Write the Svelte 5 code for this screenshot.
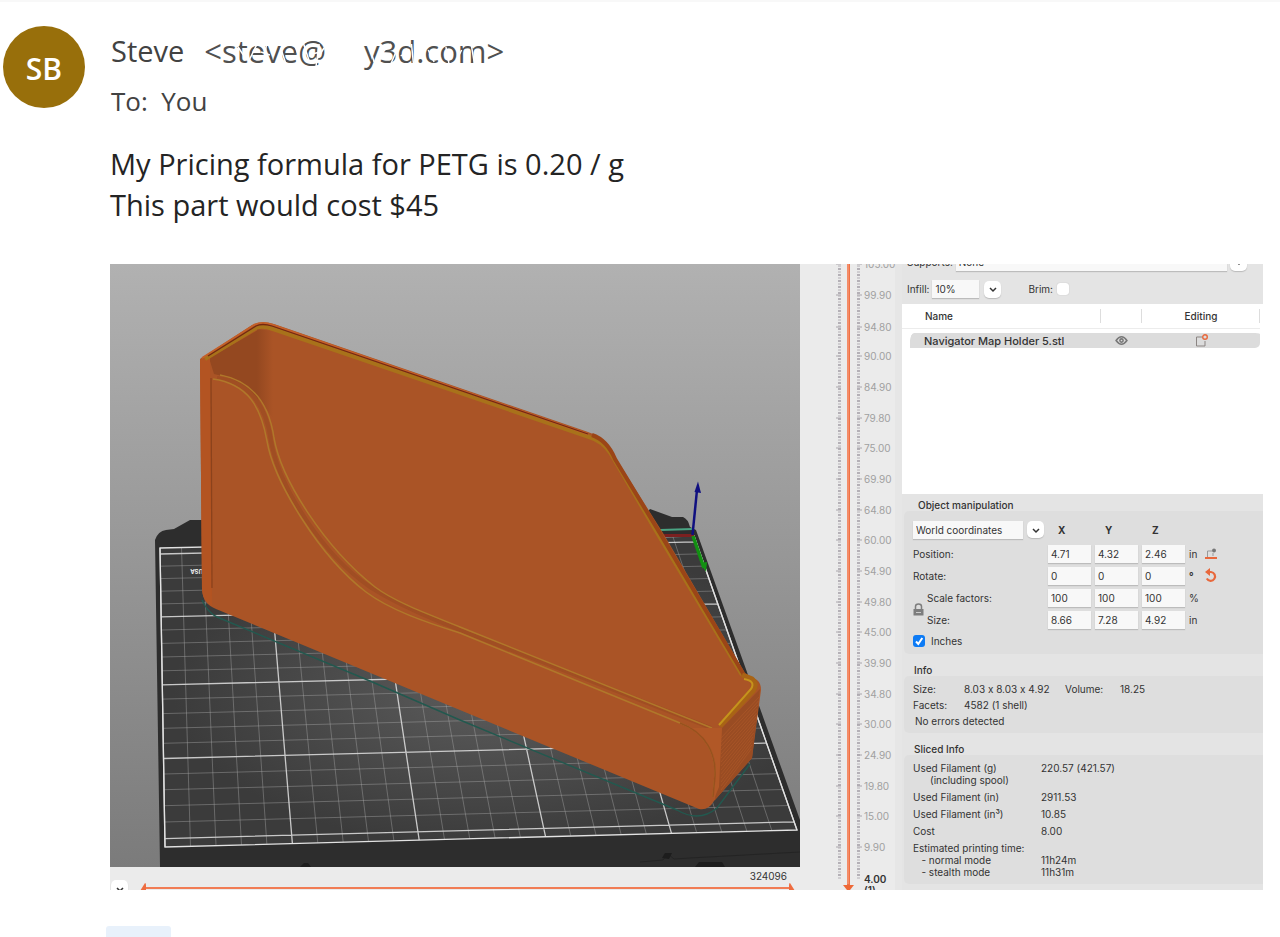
<script lang="ts">
	type Point = [number, number];

	// Print bed corners on screen: back left, back right, front right, front left
	const bed: Point[] = [
		[160, 548],
		[694, 536],
		[797, 830],
		[165, 847]
	];

	// Maps the unit square onto the four bed corners
	function project(u: number, v: number): Point {
		const [[x0, y0], [x1, y1], [x2, y2], [x3, y3]] = bed;
		const dx1 = x1 - x2;
		const dx2 = x3 - x2;
		const dy1 = y1 - y2;
		const dy2 = y3 - y2;
		const sx = x0 - x1 + x2 - x3;
		const sy = y0 - y1 + y2 - y3;
		const det = dx1 * dy2 - dx2 * dy1;
		const g = (sx * dy2 - dx2 * sy) / det;
		const h = (dx1 * sy - sx * dy1) / det;
		const w = g * u + h * v + 1;
		return [
			((x1 - x0 + g * x1) * u + (x3 - x0 + h * x3) * v + x0) / w,
			((y1 - y0 + g * y1) * u + (y3 - y0 + h * y3) * v + y0) / w
		];
	}

	function line(a: Point, b: Point) {
		return `M${a[0].toFixed(1)} ${a[1].toFixed(1)}L${b[0].toFixed(1)} ${b[1].toFixed(1)}`;
	}

	let minor = '';
	let major = '';
	for (let mm = 0; mm <= 250; mm += 10) {
		const d = line(project(mm / 250, 0), project(mm / 250, 1));
		if (mm % 50 === 0) major += d;
		else minor += d;
	}
	for (let mm = 5; mm <= 205; mm += 10) {
		const d = line(project(0, mm / 210), project(1, mm / 210));
		if ((mm - 5) % 50 === 0) major += d;
		else minor += d;
	}

	const layers = [
		105, 99.9, 94.8, 90, 84.9, 79.8, 75, 69.9, 64.8, 60, 54.9, 49.8, 45, 39.9, 34.8, 30, 24.9, 19.8,
		15, 9.9
	];
	const layerY = (z: number) => Math.round((105 - z) * 6.13);
	const dots = Array.from({ length: 205 }, (_, i) => i * 3 + 2);

	const rows = [
		{ label: 'Position:', values: ['4.71', '4.32', '2.46'], unit: 'in', icon: 'drop' },
		{ label: 'Rotate:', values: ['0', '0', '0'], unit: '°', icon: 'reset' },
		{ label: 'Scale factors:', values: ['100', '100', '100'], unit: '%', inset: true },
		{ label: 'Size:', values: ['8.66', '7.28', '4.92'], unit: 'in', inset: true }
	];
	const axes = ['X', 'Y', 'Z'];
</script>

<main>
	<header>
		<div class="avatar">SB</div>
		<div class="people">
			<p class="from">
				Steve
				<span class="address">
					&lt;steve@<i></i>y3d.com&gt;
					<svg class="smudge" viewBox="0 0 305 40" preserveAspectRatio="none" aria-hidden="true">
						<path d="M34 14l6 9M46 28l8-16M58 20l9 3M64 10l-3 18M78 16l5 15M92 12l3 9M101 11l6 18M110 22l8-2M117 12l-3 22M122 16l-9 14" />
						<path d="M168 14l5 16M182 20l8-8M190 32l6-14M200 24l9-6M211 12l2 20M228 18l6 12M246 15l3 16M262 18l-6 12M272 14l3 18" />
					</svg>
				</span>
			</p>
			<p class="to">To:&nbsp; You</p>
		</div>
	</header>

	<div class="message">
		<p>My Pricing formula for PETG is 0.20 / g</p>
		<p>This part would cost $45</p>
	</div>

	<section class="slicer">
		<div class="preview">
			<svg class="scene" viewBox="110 264 690 603" role="img" aria-label="Sliced map holder on the print bed">
				<defs>
					<linearGradient id="sky" x1="0" y1="0" x2="0" y2="1">
						<stop offset="0" stop-color="#b1b1b1" />
						<stop offset="1" stop-color="#7b7b7b" />
					</linearGradient>
					<radialGradient id="plate" cx="0.52" cy="0.5" r="0.5">
						<stop offset="0" stop-color="#5c5c5c" />
						<stop offset="1" stop-color="#3b3b3b" />
					</radialGradient>
					<linearGradient id="fold" x1="0" y1="0" x2="1" y2="0">
						<stop offset="0" stop-color="#944820" />
						<stop offset="1" stop-color="#aa5426" />
					</linearGradient>
				</defs>
				<rect x="110" y="264" width="690" height="603" fill="url(#sky)" />
				<path
					d="M155 540Q158 531 166 530L174 529L190 520H640L650 509L672 517H683Q688 519 690 527L696 530L800 820V867H160Z"
					fill="#2d2d2d"
				/>
				<path d={`M${bed.map((p) => p.join(' ')).join('L')}Z`} fill="url(#plate)" />
				<path d={minor} stroke="#a9a9a9" stroke-opacity="0.42" fill="none" />
				<path d={major} stroke="#d8d8d8" stroke-opacity="0.9" stroke-width="1.3" fill="none" />
				<path d={`M${bed.map((p) => p.join(' ')).join('L')}Z`} stroke="#e2e2e2" stroke-width="1.3" fill="none" />
				<text class="brand" x="-203" y="-569" transform="rotate(180)">USA</text>
				<path d="M640 862L663 860L668 854L674 859L690 858L800 852" stroke="#242424" fill="none" />
				<path d="M300 867L304 863H308L311 867M662 858l3-5h7l-3 6ZM695 867L699 862H722L725 867" fill="#1d1d1d" />
				<path
					d="M202 600Q208 613 217 617L370 681L460 720L677 810Q699 823 717 808L750 764"
					stroke="#22594f"
					stroke-width="1.4"
					fill="none"
				/>
				<path d="M660 530L693 529" stroke="#4aa483" stroke-width="2" />
				<path d="M664 535.500H694" stroke="#7b2020" stroke-width="3" />
				<path d="M693 536L704 568" stroke="#129012" stroke-width="3.500" />
				<path d="M701 563l5 9 1-10z" fill="#129012" />
				<path d="M692.500 535L697 490" stroke="#101080" stroke-width="2.500" />
				<path d="M694.500 492L698 481.500L701 493Z" fill="#101080" />

				<path
					d="M200 359L252 325Q262 320 274 324L588 432Q606 438 617 460L663 533L745 673L757 680Q761 683 761 690L752 758L714 801Q708 811 699 809L216 609Q203 604 202 590Z"
					fill="#aa5426"
				/>
				<path d="M209 358L258 330L258 400Q246 381 214 374Z" fill="#944820" />
				<path d="M257 329L273 331V418L257 397Z" fill="url(#fold)" />
				<path d="M200 359L210 357L212 606Q203 602 202 590Z" fill="#b35422" />
				<path d="M722 728L760 689L752 758L715 800Z" fill="#994c23" />
				<g stroke="#b8602c" stroke-opacity="0.45" fill="none">
					{#each Array(14) as _, i}
						<path d={`M721 ${738 + i * 4}L${759 - i * 0.6} ${697 + i * 4}`} />
					{/each}
				</g>
				<path
					d="M205 359L256 328Q262 325 273 329L589 437Q603 441 611 454L656 531L742 675"
					stroke="#a8721a"
					stroke-width="4"
					fill="none"
				/>
				<path d="M202 358L254 325Q262 321 273 325L588 434" stroke="#c4602a" stroke-width="2" fill="none" />
				<path d="M208 356L256 326Q262 323 272 326L588 434" stroke="#742712" stroke-width="1.3" fill="none" />
				<path d="M592 435Q607 440 615 459L661 535L744 675" stroke="#9b4517" stroke-width="4" fill="none" />
				<path d="M211 378L212 588" stroke="#8b421c" stroke-width="1.300" fill="none" />
				<g fill="none" stroke-linejoin="round">
					<path
						d="M217 378C248 382 266 404 271 441C279 487 323 555 370 587C395 603 425 616 455 628L711 728"
						stroke="#a04e23"
						stroke-width="4"
					/>
					<path
						d="M213 379C248 384 261 407 267 441C274 482 320 557 366 592C390 610 425 622 460 633L680 723C707 733 716 755 715 776L713 797"
						stroke="#b0782a"
						stroke-width="1.500"
					/>
					<path
						d="M220 375C252 381 269 403 274 438C281 479 324 547 375 587C395 602 428 614 460 627L712 728"
						stroke="#b0782a"
						stroke-width="1.500"
					/>
				</g>
				<path d="M690 728Q713 742 716 766L714 799L719 787L722 728Z" fill="#b15827" />
				<path d="M680 723C707 733 716 755 715 776L713 797" stroke="#98501f" stroke-width="1.500" fill="none" />
				<path d="M742 675L752 679Q758 684 753 691L720 726" stroke="#a86415" stroke-width="5" fill="none" />
				<path d="M744 679Q756 681 751 689L719 725" stroke="#c5931c" stroke-width="2" fill="none" />
			</svg>
			<div class="moves">
				<button class="drop" aria-label="Collapse">
					<svg viewBox="0 0 10 10"><path d="M2 4l3 3 3-3" /></svg>
				</button>
				<output>324096</output>
				<svg class="handle" viewBox="0 0 6 8"><path d="M5 0Q6 0 6 2V8H0Z" /></svg>
				<div class="track"></div>
				<svg class="handle" viewBox="0 0 6 8"><path d="M1 0Q0 0 0 2V8H6Z" /></svg>
			</div>
		</div>

		<svg class="ruler" viewBox="0 0 102 626" width="102" height="626">
			<path d="M95 0H102V626H95Z" fill="#e6e6e6" />
			{#each dots as y, i}
				<path d={`M38 ${y}h3M57 ${y}h3`} stroke="#b4b0b6" stroke-width={i % 2 ? 2 : 1} />
			{/each}
			{#each layers as z}
				<path d={`M36 ${layerY(z)}h5M57 ${layerY(z)}h5`} stroke="#aaa6ac" />
				<text x="64" y={layerY(z) + 4}>{z.toFixed(2)}</text>
			{/each}
			<path d="M47 0H50V626H47Z" fill="#ef7145" />
			<path d="M48 0V620" stroke="#f9a98c" />
			<path d="M43 621H54L50 626H47Z" fill="#ee6836" />
			<text class="current" x="64" y="619">4.00</text>
			<text class="current" x="64" y="630">(1)</text>
		</svg>

		<aside>
			<div class="settings">
				<div class="supports">
					<label for="supports">Supports:</label>
					<input id="supports" value="None" />
					<button class="drop" aria-label="Choose supports">
						<svg viewBox="0 0 10 10"><path d="M2 4l3 3 3-3" /></svg>
					</button>
				</div>
				<div class="infill">
					<label for="infill">Infill:</label>
					<input id="infill" value="10%" />
					<button class="drop" aria-label="Choose infill">
						<svg viewBox="0 0 10 10"><path d="M2 4l3 3 3-3" /></svg>
					</button>
					<label class="brim">Brim: <input type="checkbox" /></label>
				</div>
			</div>

			<table class="objects">
				<thead>
					<tr><th>Name</th><th aria-label="Visible"></th><th>Editing</th></tr>
				</thead>
				<tbody>
					<tr>
						<td>Navigator Map Holder 5.stl</td>
						<td>
							<svg class="eye" viewBox="0 0 12 10">
								<path d="M1 5Q6-2 11 5Q6 12 1 5Z" />
								<circle cx="6" cy="5" r="1.500" />
							</svg>
						</td>
						<td>
							<svg class="edit" viewBox="0 0 13 13">
								<path d="M7 3H1.500V12H10V7" stroke="#8b8583" />
								<circle cx="10" cy="3" r="2.300" stroke="#e8683c" stroke-width="1.400" />
							</svg>
						</td>
					</tr>
				</tbody>
			</table>

			<h2>Object manipulation</h2>
			<div class="box manipulation">
				<div class="row axes">
					<div class="coords">
						<input aria-label="Coordinates" value="World coordinates" />
						<button class="drop" aria-label="Choose coordinates">
							<svg viewBox="0 0 10 10"><path d="M2 4l3 3 3-3" /></svg>
						</button>
					</div>
					{#each axes as axis}
						<b>{axis}</b>
					{/each}
				</div>
				{#each rows as row}
					<div class="row">
						<span class="label" class:inset={row.inset}>{row.label}</span>
						{#each row.values as value, i}
							<input aria-label={`${row.label} ${axes[i]}`} {value} />
						{/each}
						<span class:degree={row.unit === '°'}>{row.unit}</span>
						{#if row.icon === 'drop'}
							<svg class="tool" viewBox="0 0 12 12" fill="none">
								<path d="M2.500 9V3H7M8 8V5" stroke="#999" />
								<circle cx="9" cy="2.500" r="2" fill="#777" />
								<path d="M0 10H12" stroke="#e8683c" stroke-width="2" />
							</svg>
						{:else if row.icon === 'reset'}
							<svg class="tool" viewBox="0 0 12 12" fill="none">
								<path d="M3 2H6A4.400 4.400 0 1 1 1.800 8.500" stroke="#e8683c" stroke-width="2.200" />
								<path d="M0 2L5 -2V6Z" fill="#e8683c" />
							</svg>
						{/if}
					</div>
				{/each}
				<svg class="lock" viewBox="0 0 11 13">
					<path d="M2.500 6V3.500Q2.500 1 5.500 1Q8.500 1 8.500 3.500V6" fill="none" stroke="#7d7d7d" stroke-width="1.500" />
					<path d="M0.500 6H10.500V12.500H0.500Z" fill="#7d7d7d" />
					<path d="M3 9.500H8" stroke="#ccc" />
				</svg>
				<label class="inches">
					<input type="checkbox" checked />
					<svg viewBox="0 0 12 12"><path d="M3 6.500L5.300 9L9.300 3" /></svg>
					Inches
				</label>
			</div>

			<h2>Info</h2>
			<dl class="box info">
				<dt>Size:</dt>
				<dd>8.03 x 8.03 x 4.92</dd>
				<dt>Volume:</dt>
				<dd>18.25</dd>
				<dt>Facets:</dt>
				<dd>4582 (1 shell)</dd>
				<dd class="status">No errors detected</dd>
			</dl>

			<h2>Sliced Info</h2>
			<dl class="box sliced">
				<dt>Used Filament (g)<br /><span>(including spool)</span></dt>
				<dd>220.57 (421.57)</dd>
				<dt>Used Filament (in)</dt>
				<dd>2911.53</dd>
				<dt>Used Filament (in³)</dt>
				<dd>10.85</dd>
				<dt>Cost</dt>
				<dd>8.00</dd>
				<dt>Estimated printing time:<br />&nbsp;&nbsp; - normal mode<br />&nbsp;&nbsp; - stealth mode</dt>
				<dd><br />11h24m<br />11h31m</dd>
			</dl>
		</aside>
	</section>

	<div class="reply"></div>
</main>

<style>
	:global(body) {
		background: #fff;
	}
	main {
		padding: 0 17px 0 3px;
		border-top: 2px solid #f8f8f8;
		font-family: 'Open Sans', 'Noto Sans', sans-serif;
		color: #242424;
	}
	p,
	h2,
	dl,
	dd {
		margin: 0;
	}
	header {
		display: flex;
		gap: 26px;
		padding-top: 24px;
	}
	.avatar {
		width: 82px;
		height: 82px;
		flex: none;
		border-radius: 50%;
		background: #986f0b;
		color: #fff;
		font-size: 30px;
		font-weight: 600;
		line-height: 86px;
		text-align: center;
	}
	.people {
		color: #424242;
	}
	.from {
		display: flex;
		gap: 20px;
		font-size: 29px;
		line-height: 50px;
	}
	.address {
		position: relative;
		color: #505050;
		font-size: 31px;
	}
	.address i {
		display: inline-block;
		width: 38px;
	}
	.smudge {
		position: absolute;
		inset: 6px 0;
		width: 100%;
		height: 40px;
		fill: none;
		stroke: #fff;
		stroke-width: 1.5;
	}
	.to {
		font-size: 26px;
		line-height: 50px;
	}
	.message {
		margin: 17px 0 39px 107px;
		font-size: 29px;
		line-height: 41px;
	}

	.slicer {
		display: grid;
		grid-template-columns: minmax(0, 1fr) 102px 361px;
		margin-left: 107px;
		overflow: hidden;
		background: #ebebeb;
		font: 10px/12px Inter, 'Liberation Sans', sans-serif;
		font-feature-settings: 'calt' 0;
		color: #333;
	}
	.scene {
		display: block;
		width: 100%;
	}
	.brand {
		fill: #eee;
		font-size: 6px;
		font-weight: 700;
	}
	.moves {
		display: grid;
		grid-template-columns: 30px 6px 1fr 6px 5px;
		grid-template-rows: 16px 7px;
		height: 23px;
		overflow: hidden;
	}
	.moves .drop {
		grid-row: 1 / 3;
		margin: 13px 0 0 1px;
	}
	.moves output {
		grid-column: 2 / 6;
		padding-right: 13px;
		line-height: 18px;
		text-align: right;
	}
	.handle {
		width: 6px;
		height: 8px;
		fill: #ee6c40;
	}
	.track {
		height: 2px;
		margin-top: 4px;
		background: #f17c54;
	}
	.drop {
		display: grid;
		place-items: center;
		width: 17px;
		height: 17px;
		flex: none;
		padding: 0;
		border: 0;
		border-radius: 5px;
		background: #fff;
		box-shadow: 0 1px 1px #bbb;
	}
	.drop svg {
		width: 10px;
		height: 10px;
		fill: none;
		stroke: #333;
		stroke-width: 1.5;
	}
	.ruler text {
		fill: #a0a0a0;
		font-size: 10px;
	}
	.ruler .current {
		fill: #333;
		font-weight: 600;
	}

	aside {
		overflow: hidden;
		background: #e4e4e4;
	}
	aside input:not([type='checkbox']) {
		box-sizing: border-box;
		min-width: 0;
		height: 18px;
		padding: 0 3px;
		border: 0;
		background: #f8f8f8;
		box-shadow: 0 1px 1px #bcbcbc;
		color: #333;
		font: inherit;
	}
	.settings {
		display: flex;
		flex-direction: column;
		gap: 9px;
		height: 40px;
		padding-left: 5px;
	}
	.supports,
	.infill {
		display: flex;
		align-items: center;
		gap: 3px;
	}
	.supports {
		margin-top: -11px;
		padding-right: 16px;
	}
	.supports input {
		flex: 1;
	}
	.infill #infill {
		width: 47px;
	}
	.infill .drop {
		margin-left: 2px;
	}
	.brim {
		display: flex;
		align-items: center;
		gap: 4px;
		margin-left: 24px;
	}
	.brim input {
		appearance: none;
		width: 12px;
		height: 12px;
		margin: 0;
		border-radius: 3px;
		background: #fff;
		box-shadow: 0 0 1px #aaa;
	}
	.objects {
		width: 100%;
		border-spacing: 0;
		table-layout: fixed;
		background: #fff;
		border-right: 3px solid #fff;
		border-bottom: 146px solid #fff;
	}
	.objects th {
		height: 24px;
		padding: 0;
		border-bottom: 1px solid #ececec;
		font-weight: 500;
		background: linear-gradient(#ddd, #ddd) right center / 1px 14px no-repeat;
	}
	.objects th:first-child {
		width: 176px;
		padding-left: 23px;
		text-align: left;
	}
	.objects th:nth-child(2) {
		width: 41px;
	}
	.objects td {
		height: 15px;
		padding: 0;
		border: 0 solid #fff;
		border-top-width: 4px;
		background: #dcdcdc;
		background-clip: padding-box;
		text-align: center;
	}
	.objects td:first-child {
		padding-left: 14px;
		border-left-width: 8px;
		border-radius: 12px 0 0 5px;
		font-size: 11px;
		font-weight: 500;
		text-align: left;
	}
	.objects td:last-child {
		border-radius: 0 5px 5px 0;
	}
	.objects svg {
		display: block;
		margin: auto;
		fill: none;
		stroke: #777;
	}
	.eye {
		width: 13px;
		height: 11px;
		stroke-width: 1.4;
	}
	.edit {
		width: 13px;
		height: 13px;
	}
	h2 {
		padding: 5px 0 0 12px;
		font-size: 10px;
		font-weight: 500;
		line-height: 12px;
	}
	h2:first-of-type {
		padding-left: 16px;
	}
	.box {
		margin: 0 0 5px 2px;
		border-radius: 5px 0 0 5px;
		background: #dedede;
	}
	.manipulation {
		position: relative;
		display: grid;
		gap: 4px;
		padding: 8px 0 5px 9px;
	}
	.row {
		display: grid;
		grid-template-columns: 131px 43px 43px 43px 12px 12px;
		gap: 4px;
		align-items: center;
		height: 18px;
	}
	.axes {
		height: 22px;
	}
	.axes b {
		padding-left: 10px;
	}
	.coords {
		display: flex;
		gap: 4px;
	}
	.coords input {
		width: 110px;
	}
	.inset {
		padding-left: 14px;
	}
	.degree {
		font-weight: 700;
	}
	.tool {
		width: 12px;
		height: 12px;
		overflow: visible;
	}
	.lock {
		position: absolute;
		left: 9px;
		top: 92px;
		width: 11px;
		height: 13px;
	}
	.inches {
		position: relative;
		display: flex;
		align-items: center;
		gap: 6px;
		height: 16px;
	}
	.inches input {
		appearance: none;
		width: 12px;
		height: 12px;
		margin: 0;
		border-radius: 3px;
		background: #0d7bf5;
	}
	.inches svg {
		position: absolute;
		left: 0;
		width: 12px;
		height: 12px;
		fill: none;
		stroke: #fff;
		stroke-width: 2;
	}
	.info {
		display: grid;
		grid-template-columns: 51px 101px 55px 1fr;
		row-gap: 4px;
		padding: 7px 0 6px 9px;
	}
	.info .status {
		grid-column: 1 / 5;
		padding-left: 2px;
	}
	.sliced {
		display: grid;
		grid-template-columns: 128px 1fr;
		row-gap: 5px;
		padding: 7px 0 6px 9px;
	}
	.sliced span {
		padding-left: 17px;
	}
	.reply {
		width: 65px;
		height: 11px;
		margin: 36px 0 0 103px;
		border-radius: 3px 3px 0 0;
		background: #e8f1fb;
	}
</style>
